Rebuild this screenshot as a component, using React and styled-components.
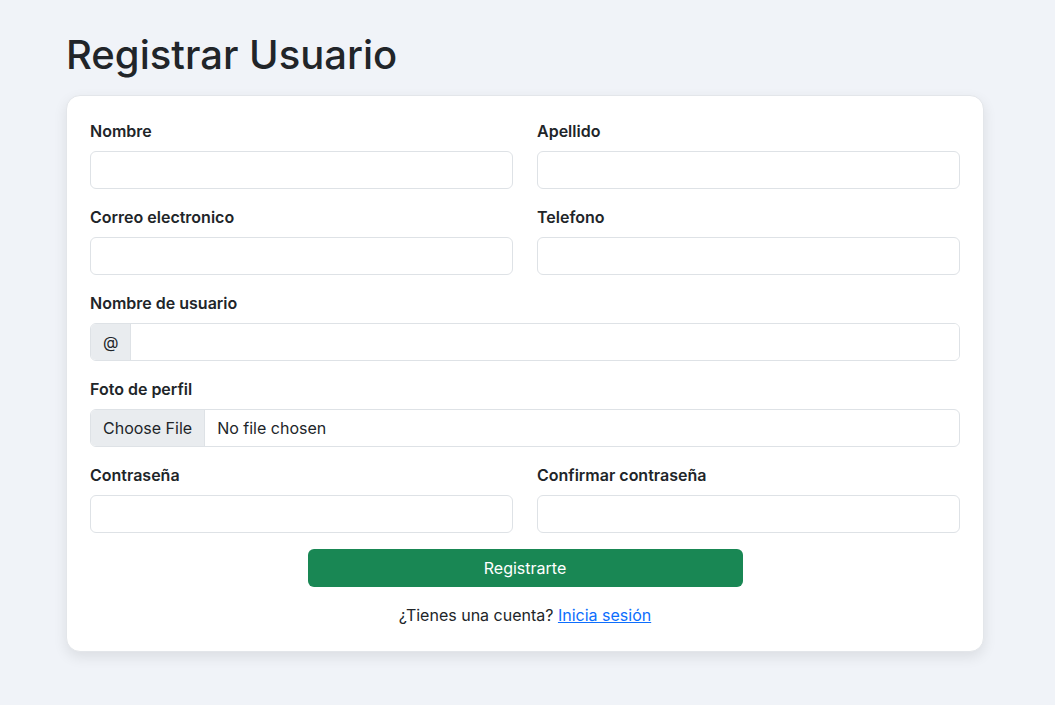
import React from "react";
import styled, { createGlobalStyle } from "styled-components";

const Global = createGlobalStyle`
  html, body { margin: 0; padding: 0; }
  body {
    background: #f0f3f8;
    font-family: Inter, "Noto Sans", sans-serif;
    color: #212529;
    font-size: 16px;
    line-height: 1.5;
  }
  * { box-sizing: border-box; }
`;

const Page = styled.div`
  padding: 31px 70px 40px 66px;
`;

const Title = styled.h1`
  margin: 0 0 16px;
  font-size: 40px;
  font-weight: 500;
  line-height: 1.2;
  color: #212529;
`;

const Card = styled.form`
  width: 918px;
  background: #fff;
  border: 1px solid #e3e6ea;
  border-radius: 14px;
  box-shadow: 0 5px 14px rgba(0, 0, 0, 0.09);
  padding: 23px 23px 24px;
  display: flex;
  flex-direction: column;
  gap: 16px;
`;

const Row = styled.div`
  display: grid;
  grid-template-columns: ${(p) => (p.$cols === 1 ? "1fr" : "1fr 1fr")};
  column-gap: 24px;
`;

const Field = styled.div`
  display: flex;
  flex-direction: column;
`;

const Label = styled.label`
  font-weight: 600;
  font-size: 16px;
  line-height: 24px;
  margin-bottom: 8px;
`;

const Input = styled.input`
  height: 38px;
  width: 100%;
  border: 1px solid #dee2e6;
  border-radius: 6px;
  padding: 6px 12px;
  font: inherit;
  background: #fff;
  outline: none;
`;

const Group = styled.div`
  display: flex;
  height: 38px;
  border: 1px solid #dee2e6;
  border-radius: 6px;
  overflow: hidden;
`;

const Addon = styled.span`
  display: flex;
  align-items: center;
  padding: 0 12px;
  background: #e9ecef;
  border-right: 1px solid #dee2e6;
  color: #212529;
`;

const GroupInput = styled.input`
  flex: 1;
  border: none;
  outline: none;
  font: inherit;
  padding: 6px 12px;
`;

const FileText = styled.span`
  display: flex;
  align-items: center;
  padding: 0 12px;
  color: #212529;
`;

const Submit = styled.button`
  align-self: center;
  width: 50%;
  height: 38px;
  border: none;
  border-radius: 6px;
  background: #198754;
  color: #fff;
  font: inherit;
  cursor: pointer;
`;

const Footer = styled.p`
  margin: 0;
  text-align: center;
  line-height: 24px;
`;

const Link = styled.a`
  color: #0d6efd;
  text-decoration: underline;
`;

export default function App() {
  return (
    <>
      <Global />
      <Page>
        <Title>Registrar Usuario</Title>
        <Card onSubmit={(e) => e.preventDefault()}>
          <Row>
            <Field>
              <Label>Nombre</Label>
              <Input type="text" />
            </Field>
            <Field>
              <Label>Apellido</Label>
              <Input type="text" />
            </Field>
          </Row>
          <Row>
            <Field>
              <Label>Correo electronico</Label>
              <Input type="email" />
            </Field>
            <Field>
              <Label>Telefono</Label>
              <Input type="tel" />
            </Field>
          </Row>
          <Row $cols={1}>
            <Field>
              <Label>Nombre de usuario</Label>
              <Group>
                <Addon>@</Addon>
                <GroupInput type="text" />
              </Group>
            </Field>
          </Row>
          <Row $cols={1}>
            <Field>
              <Label>Foto de perfil</Label>
              <Group>
                <Addon>Choose File</Addon>
                <FileText>No file chosen</FileText>
              </Group>
            </Field>
          </Row>
          <Row>
            <Field>
              <Label>Contraseña</Label>
              <Input type="password" />
            </Field>
            <Field>
              <Label>Confirmar contraseña</Label>
              <Input type="password" />
            </Field>
          </Row>
          <Submit type="submit">Registrarte</Submit>
          <Footer>
            ¿Tienes una cuenta? <Link href="#">Inicia sesión</Link>
          </Footer>
        </Card>
      </Page>
    </>
  );
}
